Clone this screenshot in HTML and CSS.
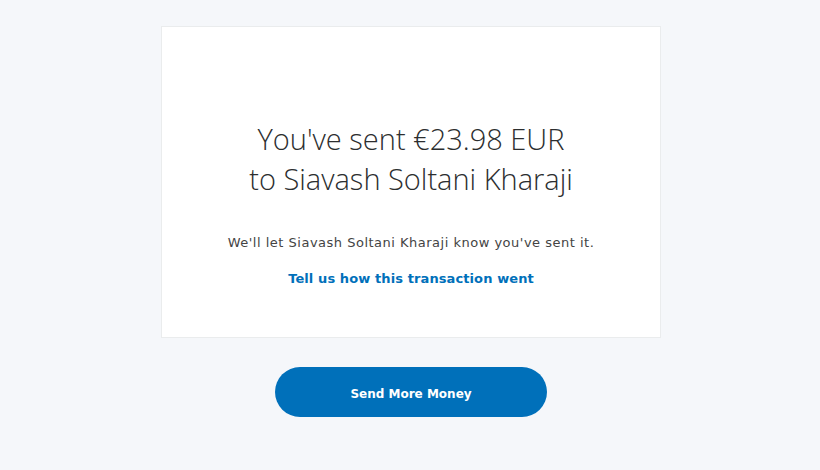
FILE: index.html
```html
<!DOCTYPE html>
<html>
<head>
<meta charset="utf-8">
<link rel="stylesheet" href="styles.css">
</head>
<body>
<main class="page">
  <section class="card">
    <h1 class="title">You've sent €23.98 EUR<br>to Siavash Soltani Kharaji</h1>
    <p class="note">We'll let Siavash Soltani Kharaji know you've sent it.</p>
    <a class="feedback" href="#">Tell us how this transaction went</a>
  </section>
  <button class="primary">Send More Money</button>
</main>
</body>
</html>
```
FILE: styles.css
```css
html, body {
  margin: 0;
  padding: 0;
  background: #f5f7fa;
}
.page {
  display: flex;
  flex-direction: column;
  align-items: center;
  padding-top: 26px;
  padding-left: 2px;
}
.card {
  box-sizing: border-box;
  width: 500px;
  height: 312px;
  background: #fff;
  border: 1px solid #eaeced;
  display: flex;
  flex-direction: column;
  align-items: center;
  padding-top: 92px;
}
.title {
  margin: 0;
  font-family: "Open Sans", sans-serif;
  font-weight: 300;
  font-size: 29px;
  line-height: 40px;
  color: #2c2e2f;
  text-align: center;
}
.note {
  margin: 34px 0 0;
  font-family: "DejaVu Sans", sans-serif;
  font-size: 13px;
  line-height: 20px;
  color: #444;
  letter-spacing: 0.5px;
}
.feedback {
  margin-top: 16px;
  font-family: "DejaVu Sans", sans-serif;
  font-weight: bold;
  font-size: 13px;
  line-height: 20px;
  color: #0070ba;
  text-decoration: none;
  letter-spacing: 0.1px;
}
.primary {
  margin-top: 29px;
  width: 272px;
  height: 50px;
  border: none;
  border-radius: 25px;
  background: #0070ba;
  color: #fff;
  font-family: "DejaVu Sans", sans-serif;
  font-weight: bold;
  font-size: 12px;
  padding: 3px 0 0;
}
```
